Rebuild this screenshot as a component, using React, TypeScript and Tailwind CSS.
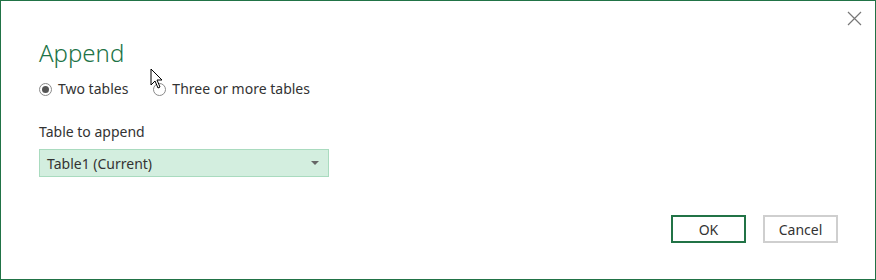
import React from 'react';

const Radio: React.FC<{ checked?: boolean; label: string }> = ({ checked, label }) => (
  <label className="flex items-center gap-[6px]">
    <span className="w-[13px] h-[13px] rounded-full border border-[#8a8a8a] bg-white flex items-center justify-center">
      {checked && <span className="w-[7px] h-[7px] rounded-full bg-[#555]" />}
    </span>
    <span>{label}</span>
  </label>
);

const App: React.FC = () => {
  return (
    <div
      className="relative w-[876px] h-[280px] bg-white border border-[#217346] text-[#333] flex flex-col"
      style={{ fontFamily: '"Noto Sans", "Open Sans", sans-serif' }}
    >
      {/* close */}
      <button className="absolute top-[9px] right-[13px] w-[16px] h-[16px] flex items-center justify-center">
        <svg width="15" height="15" viewBox="0 0 15 15">
          <path d="M1 1 L14 14 M14 1 L1 14" stroke="#777" strokeWidth="1.2" />
        </svg>
      </button>

      <div className="pl-[38px] pt-[34px]">
        <h1 className="text-[24px] font-light text-[#217346] leading-[36px]">Append</h1>

        <div className="flex items-center gap-[25px] mt-[8px] text-[14px] leading-[20px]">
          <Radio checked label="Two tables" />
          <Radio label="Three or more tables" />
        </div>

        <div className="mt-[23px] text-[14px] leading-[20px]">Table to append</div>

        <div className="mt-[7px] w-[290px] h-[28px] bg-[#d3eedf] border border-[#a9dbbf] flex items-center justify-between pl-[7px] pr-[9px] text-[14px]">
          <span>Table1 (Current)</span>
          <svg width="8" height="4" viewBox="0 0 8 4">
            <path d="M0 0 H8 L4 4 Z" fill="#666" />
          </svg>
        </div>
      </div>

      <div className="flex justify-end gap-[17px] pr-[37px] mt-[38px] text-[14px]">
        <button className="w-[75px] h-[28px] border-2 border-[#217346] bg-white text-[#333]">OK</button>
        <button className="w-[75px] h-[28px] border-2 border-[#cfcfcf] bg-white text-[#333]">Cancel</button>
      </div>

      {/* mouse pointer */}
      <svg className="absolute left-[149px] top-[67px]" width="14" height="22" viewBox="0 0 14 22">
        <path d="M1 1 V17 L5 13 L8 20 L10 19 L7 12 H12 Z" fill="#fff" stroke="#000" strokeWidth="1" strokeLinejoin="round" />
      </svg>
    </div>
  );
};

export default App;
